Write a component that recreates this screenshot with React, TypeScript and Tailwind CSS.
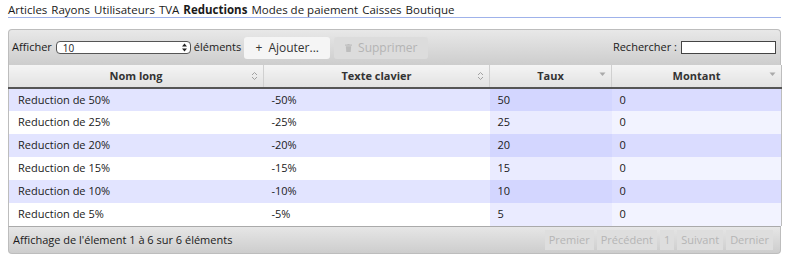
import React from 'react';

const rows = [
  { nom: 'Reduction de 50%', texte: '-50%', taux: '50', montant: '0' },
  { nom: 'Reduction de 25%', texte: '-25%', taux: '25', montant: '0' },
  { nom: 'Reduction de 20%', texte: '-20%', taux: '20', montant: '0' },
  { nom: 'Reduction de 15%', texte: '-15%', taux: '15', montant: '0' },
  { nom: 'Reduction de 10%', texte: '-10%', taux: '10', montant: '0' },
  { nom: 'Reduction de 5%', texte: '-5%', taux: '5', montant: '0' },
];

const menu = ['Articles', 'Rayons', 'Utilisateurs', 'TVA', 'Reductions', 'Modes de paiement', 'Caisses', 'Boutique'];

const SortBoth = () => (
  <svg width="7" height="10" viewBox="0 0 7 10" className="text-[#999]">
    <path d="M1 4 L3.5 1.5 L6 4" fill="none" stroke="currentColor" strokeWidth="0.9" />
    <path d="M1 6 L3.5 8.5 L6 6" fill="none" stroke="currentColor" strokeWidth="0.9" />
  </svg>
);

const SortDesc = () => (
  <svg width="7" height="6" viewBox="0 0 7 6" className="text-[#aaa]">
    <path d="M0.5 1.5 L6.5 1.5 L3.5 5 Z" fill="currentColor" />
  </svg>
);

const Header = ({ label, icon, w }: { label: string; icon: 'both' | 'desc'; w: string }) => (
  <th className={`${w} relative h-[23px] border-r border-[#d0d0d0] last:border-r-0 bg-gradient-to-b from-[#f4f4f4] to-[#e2e2e2] text-center font-bold text-[#333] p-0`}>
    {label}
    <span className="absolute right-[5px] top-[6px] flex">{icon === 'both' ? <SortBoth /> : <SortDesc />}</span>
  </th>
);

export default function App() {
  return (
    <div className="bg-white w-[797px] h-[266px] text-[11px] text-[#1a1a1a]" style={{ fontFamily: '"Open Sans", "DejaVu Sans", sans-serif' }}>
      <div className="ml-2 w-[773px] pt-[3px]">
        <div className="flex gap-[4px] text-[11.5px] text-[#1a1a1a] leading-[14px] border-b border-[#9fb2ea]">
          {menu.map((m) => (
            <span key={m} className={m === 'Reductions' ? 'font-bold' : ''}>{m}</span>
          ))}
        </div>

        <div className="mt-[11px] h-[36px] rounded-t-[4px] border border-[#bdbdbd] border-b-0 bg-gradient-to-b from-[#e8e8e8] to-[#cdcdcd] flex items-center pl-[3px] pr-[4px]">
          <span>Afficher</span>
          <div className="ml-[4px] w-[135px] h-[13px] rounded-[4px] border border-[#555] bg-white flex items-center justify-between pl-[6px] pr-[3px] text-[10px] leading-none">
            <span>10</span>
            <svg width="5" height="9" viewBox="0 0 5 9">
              <path d="M0 3.5 L2.5 0.5 L5 3.5 Z" fill="#222" />
              <path d="M0 5.5 L2.5 8.5 L5 5.5 Z" fill="#222" />
            </svg>
          </div>
          <span className="ml-[3px]">éléments</span>
          <button className="ml-[3px] h-[22px] w-[86px] rounded-[3px] bg-[#f5f5f5] text-[#333] text-[12px] flex items-center justify-center gap-[6px]">
            <span>+</span>
            <span>Ajouter...</span>
          </button>
          <button className="ml-[4px] h-[22px] w-[94px] rounded-[3px] bg-[#dcdcdc] text-[#b4b4b4] text-[12px] flex items-center justify-center gap-[6px]">
            <svg width="7" height="8" viewBox="0 0 7 8">
              <rect x="0" y="0.5" width="7" height="1.2" fill="#bdbdbd" />
              <rect x="2.5" y="0" width="2" height="1" fill="#bdbdbd" />
              <path d="M0.8 2.3 H6.2 L5.7 8 H1.3 Z" fill="#bdbdbd" />
            </svg>
            <span>Supprimer</span>
          </button>
          <div className="ml-auto flex items-center gap-[4px]">
            <span>Rechercher :</span>
            <div className="w-[95px] h-[13px] border border-[#444] bg-white" />
          </div>
        </div>

        <table className="w-[773px] table-fixed border-collapse border-x border-[#bdbdbd]">
          <thead>
            <tr className="border-b-2 border-[#555]">
              <Header label="Nom long" icon="both" w="w-[255px]" />
              <Header label="Texte clavier" icon="both" w="w-[226px]" />
              <Header label="Taux" icon="desc" w="w-[122px]" />
              <Header label="Montant" icon="desc" w="w-[170px]" />
            </tr>
          </thead>
          <tbody>
            {rows.map((r, i) => {
              const odd = i % 2 === 0;
              return (
                <tr key={r.nom} className={`h-[23px] ${odd ? 'bg-[#e2e4ff]' : 'bg-white'}`}>
                  <td className="pl-[9px] p-0">{r.nom}</td>
                  <td className="pl-[8px] p-0">{r.texte}</td>
                  <td className={`pl-[8px] p-0 ${odd ? 'bg-[#d3d6ff]' : 'bg-[#eaebff]'}`}>{r.taux}</td>
                  <td className={`pl-[8px] p-0 ${odd ? 'bg-[#dadcff]' : 'bg-[#f2f3ff]'}`}>{r.montant}</td>
                </tr>
              );
            })}
          </tbody>
        </table>

        <div className="h-[28px] rounded-b-[4px] border border-[#bdbdbd] border-t-[#aaa] bg-gradient-to-b from-[#e6e6e6] to-[#cdcdcd] flex items-center pl-[4px] pr-[7px]">
          <span>Affichage de l'élement 1 à 6 sur 6 éléments</span>
          <div className="ml-auto flex gap-[3px] text-[#b5b5b5] text-[11px]">
            {['Premier', 'Précédent', '1', 'Suivant', 'Dernier'].map((p) => (
              <span key={p} className="h-[20px] px-[4px] flex items-center bg-[#dedede]">{p}</span>
            ))}
          </div>
        </div>
      </div>
    </div>
  );
}
